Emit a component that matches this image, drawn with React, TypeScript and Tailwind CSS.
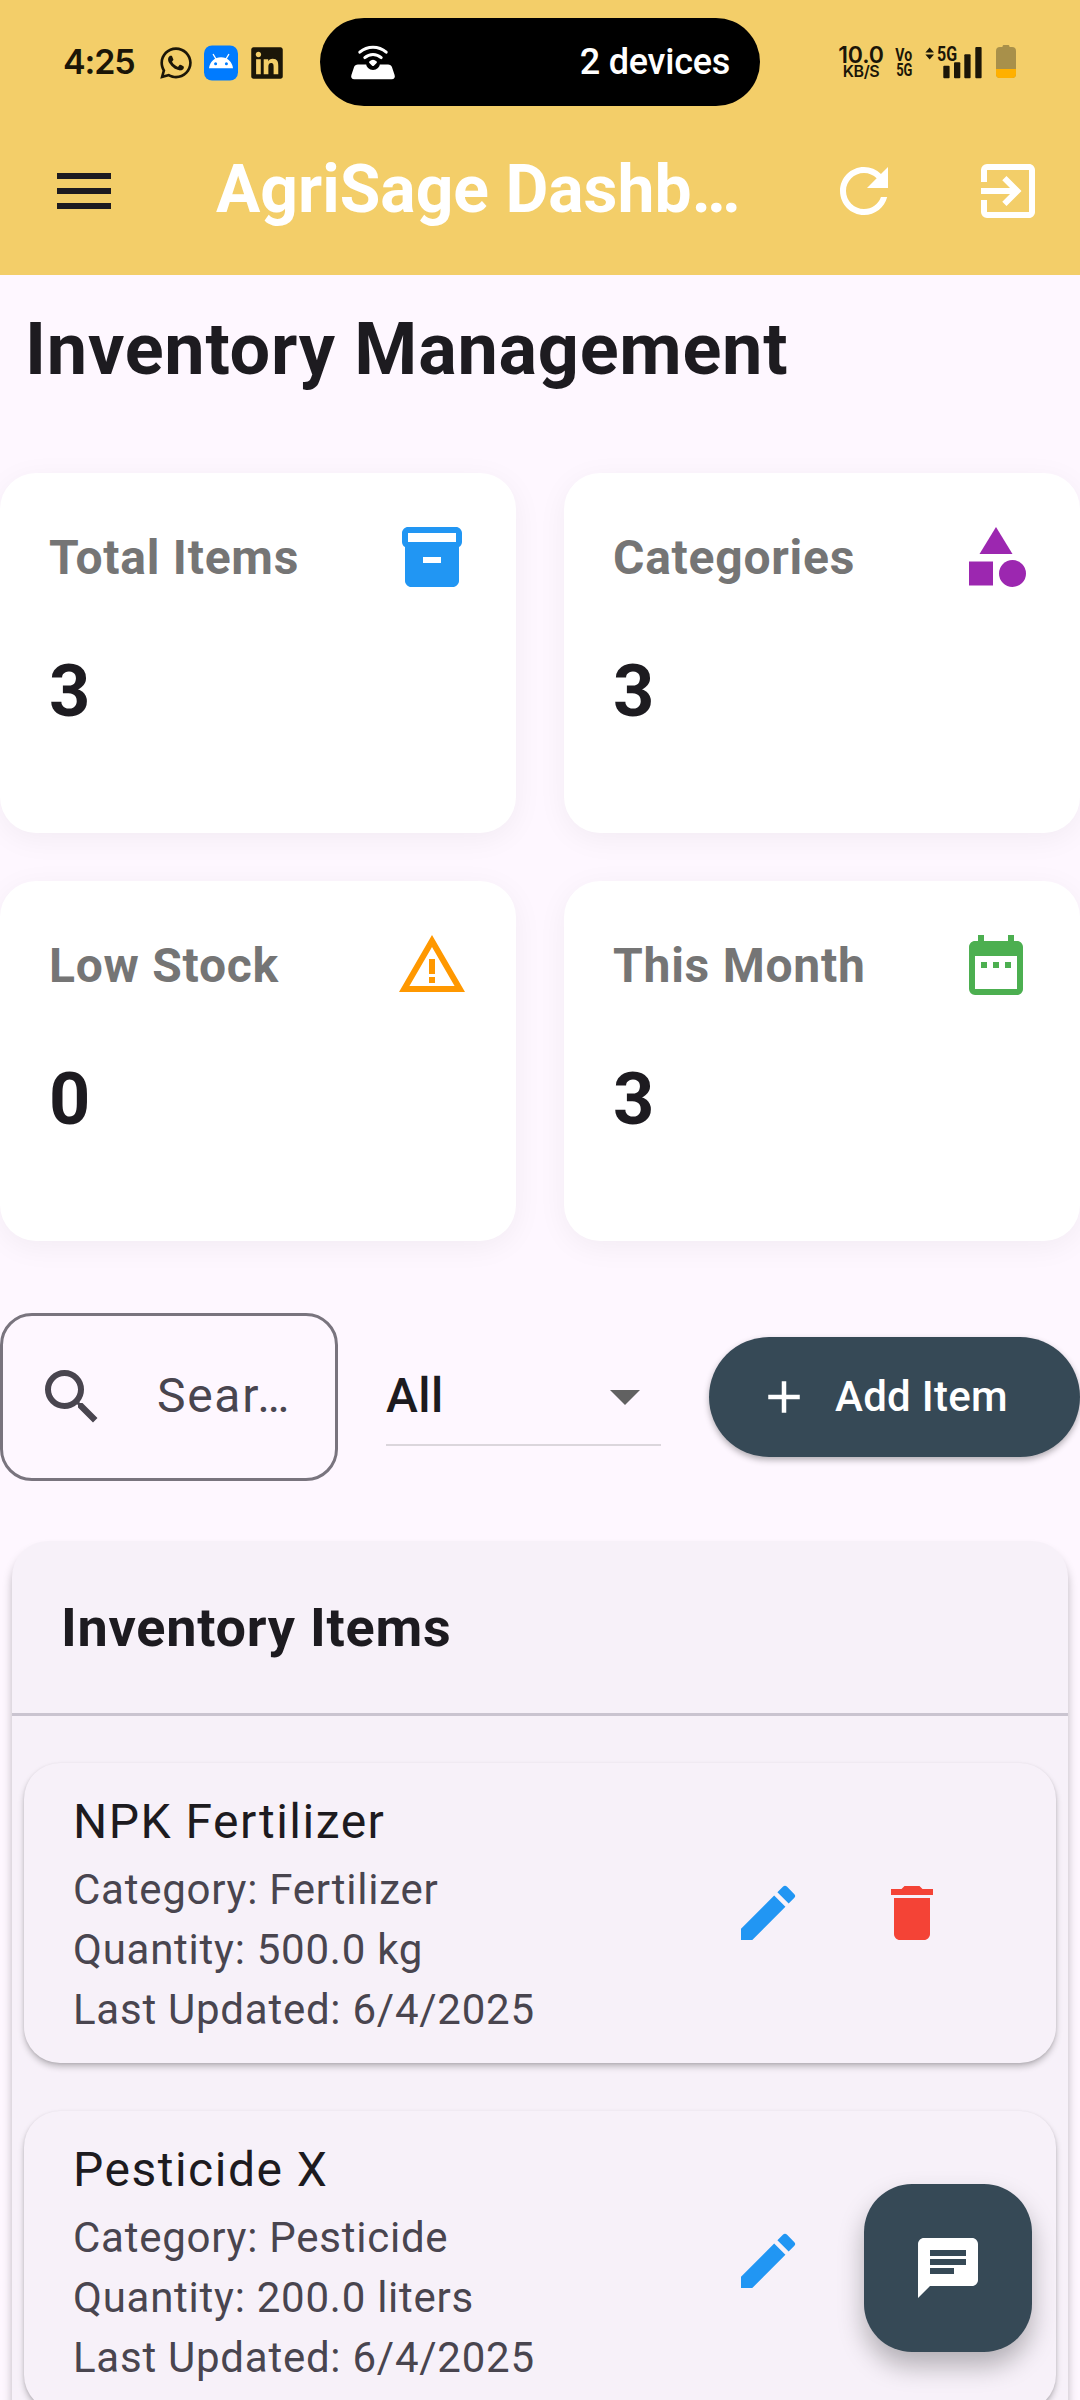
import type { ReactNode } from 'react';
import { FaLinkedin, FaWhatsapp } from 'react-icons/fa';
import {
  MdAdd,
  MdArrowDropDown,
  MdCategory,
  MdChat,
  MdDateRange,
  MdDelete,
  MdEdit,
  MdExitToApp,
  MdInventory2,
  MdMenu,
  MdRefresh,
  MdSearch,
} from 'react-icons/md';

function AndroidBadge() {
  return (
    <svg width="34" height="36" viewBox="0 0 34 36">
      <rect y="0.500" width="34" height="35" rx="8" fill="#007bff" />
      <path d="M5 23.300C5.600 17.200 10.600 12.300 17 12.300s11.400 4.900 12 11z" fill="#fff" />
      <path d="M9.300 9.500l3 5M24.700 9.500l-3 5" stroke="#fff" strokeWidth="1.400" strokeLinecap="round" />
      <circle cx="11.600" cy="18.700" r="1.500" fill="#007bff" />
      <circle cx="22.400" cy="18.700" r="1.500" fill="#007bff" />
    </svg>
  );
}

function HotspotIcon() {
  return (
    <svg width="46" height="36" viewBox="0 0 46 36" fill="none">
      <path
        d="M8 20.500h30c2 0 3.400 1 4 2.800l2.600 7.700c.8 2.500-.4 4.200-3 4.200H4.400c-2.600 0-3.800-1.700-3-4.200L4 23.300c.6-1.800 2-2.800 4-2.800z"
        fill="#fff"
      />
      <circle cx="23" cy="19" r="7" fill="#000" />
      <path d="M19.300 17.500a5.600 5.600 0 0 1 7.400 0c.4.400.3 1-.1 1.400l-2.500 2.500a1.500 1.500 0 0 1-2.200 0l-2.500-2.500c-.4-.4-.5-1-.1-1.400z" fill="#fff" />
      <path d="M14.800 13.600c4.800-4.200 11.600-4.200 16.400 0" stroke="#fff" strokeWidth="3" strokeLinecap="round" />
      <path d="M9.800 8.200c7.700-6.700 18.700-6.700 26.400 0" stroke="#fff" strokeWidth="3" strokeLinecap="round" />
    </svg>
  );
}

function SignalIcon() {
  return (
    <svg width="58" height="32" viewBox="0 0 58 32" fill="#1b1608" className="block">
      <path d="M4.700 0.500L9 5.500H0.400z M4.700 12.500L0.400 7.500H9z" />
      <rect x="18.300" y="18.700" width="6.300" height="12.500" rx="1" />
      <rect x="29" y="15.300" width="6.300" height="15.900" rx="1" />
      <rect x="39.300" y="7.300" width="6.300" height="23.900" rx="1" />
      <rect x="50.300" y="0" width="6.300" height="31.200" rx="1" />
    </svg>
  );
}

function BatteryIcon() {
  return (
    <svg width="20" height="33" viewBox="0 0 20 33">
      <path
        d="M6.500 2V1.500C6.500.6 7.100 0 8 0h4c.9 0 1.500.6 1.500 1.500V2H16a4 4 0 0 1 4 4v23a4 4 0 0 1-4 4H4a4 4 0 0 1-4-4V6a4 4 0 0 1 4-4z"
        fill="#a8904a"
      />
      <path d="M0 24h20v5a4 4 0 0 1-4 4H4a4 4 0 0 1-4-4z" fill="#ffb000" />
    </svg>
  );
}

function WarningIcon() {
  return (
    <svg width="72" height="72" viewBox="0 0 24 24" fill="#ff9800">
      <path d="M12 5.990L19.530 19H4.470L12 5.990M12 2L1 21h22L12 2zm1 14h-2v2h2v-2zm0-6h-2v5h2v-5z" />
    </svg>
  );
}

function StatusBar() {
  return (
    <div className="flex h-[107px] items-start text-[#1b1608]">
      <div className="mt-[41px] ml-[63px] w-[73px] font-['Inter'] text-[34px] leading-[41px] font-semibold tracking-[-1.1px]">
        4:25
      </div>
      <FaWhatsapp size={36} className="mt-[45px] ml-[22px]" />
      <div className="mt-[45px] ml-[10px]">
        <AndroidBadge />
      </div>
      <FaLinkedin size={36} className="mt-[45px] ml-[11px]" />
      <div className="mt-[18px] ml-[35px] flex h-[88px] w-[440px] items-center justify-between rounded-full bg-black pr-[30px] pl-[30px]">
        <HotspotIcon />
        <span className="text-[36px] leading-[42px] font-medium tracking-[-0.25px] text-white">2 devices</span>
      </div>
      <div className="mt-[45px] ml-[77px] flex w-[48px] flex-col items-center font-['Inter']">
        <span className="text-[23px] leading-[21px] font-semibold tracking-[-0.2px]">10.0</span>
        <span className="text-[16px] leading-[11px] font-semibold tracking-[-0.5px]">KB/S</span>
      </div>
      <div className="mt-[47px] ml-[11px] flex w-[16px] flex-col items-center text-[18px] leading-[15px] font-bold">
        <span className="scale-x-[0.78]">Vo</span>
        <span className="scale-x-[0.72]">5G</span>
      </div>
      <div className="relative mt-[47px] ml-[13px]">
        <SignalIcon />
        <span className="absolute top-0 left-[12px] origin-left scale-x-[0.82] text-[19.500px] leading-[15px] font-bold">5G</span>
      </div>
      <div className="mt-[45px] ml-[13px]">
        <BatteryIcon />
      </div>
    </div>
  );
}

function AppBar() {
  return (
    <div className="flex h-[168px] items-center">
      <div className="flex w-[168px] shrink-0 justify-center">
        <MdMenu size={72} color="#1d1b20" />
      </div>
      <h1 className="ml-12 flex-1 pb-[3px] text-[66px] leading-[84px] font-bold whitespace-nowrap text-white">AgriSage Dashb…</h1>
      <div className="flex w-[288px] shrink-0 text-white">
        <div className="flex w-[144px] justify-center">
          <MdRefresh size={72} />
        </div>
        <div className="flex w-[144px] justify-center">
          <MdExitToApp size={72} />
        </div>
      </div>
    </div>
  );
}

function StatCard({ label, value, icon }: { label: string; value: number; icon: ReactNode }) {
  return (
    <div className="h-[360px] rounded-[36px] bg-white p-12 shadow-[0_6px_30px_rgba(0,0,0,0.05)]">
      <div className="flex items-center justify-between">
        <span className="pl-px text-[48px] leading-[69px] font-bold tracking-[0.75px] text-[#757575]">{label}</span>
        {icon}
      </div>
      <div className="mt-[47px] pl-px text-[72px] leading-[103px] font-bold tracking-[0.75px]">{value}</div>
    </div>
  );
}

function ItemCard({ name, category, quantity, updated }: { name: string; category: string; quantity: string; updated: string }) {
  return (
    <div className="flex h-[300px] items-center justify-between rounded-[36px] bg-[#f7f1f9] pr-[72px] pl-[49px] shadow-[0_4px_6px_rgba(0,0,0,0.22),0_1px_3px_rgba(0,0,0,0.1)]">
      <div>
        <div className="text-[48px] leading-[72px] tracking-[1.5px]">{name}</div>
        <div className="mt-[2px] text-[42px] leading-[60px] tracking-[0.75px] text-[#49454f]">
          <div>Category: {category}</div>
          <div>Quantity: {quantity}</div>
          <div>Last Updated: {updated}</div>
        </div>
      </div>
      <div className="flex">
        <div className="flex w-[144px] justify-center">
          <MdEdit size={72} color="#2196f3" />
        </div>
        <div className="flex w-[144px] justify-center">
          <MdDelete size={72} color="#f44336" />
        </div>
      </div>
    </div>
  );
}

export default function App() {
  return (
    <div className="relative h-[2400px] w-[1080px] overflow-hidden bg-[#fef7ff] font-['Roboto',sans-serif] text-[#1d1b20]">
      <header className="bg-[#f3ce69]">
        <StatusBar />
        <AppBar />
      </header>

      <main>
        <h2 className="mt-6 ml-[25px] text-[72px] leading-[102px] font-bold tracking-[0.75px]">Inventory Management</h2>

        <section className="mt-[72px] grid grid-cols-2 gap-12">
          <StatCard label="Total Items" value={3} icon={<MdInventory2 size={72} color="#2196f3" />} />
          <StatCard label="Categories" value={3} icon={<MdCategory size={72} color="#9c27b0" />} />
          <StatCard label="Low Stock" value={0} icon={<WarningIcon />} />
          <StatCard label="This Month" value={3} icon={<MdDateRange size={72} color="#4caf50" />} />
        </section>

        <section className="mt-[72px] flex items-center">
          <div className="flex h-[168px] w-[338px] items-center rounded-[32px] border-[3px] border-[#79747e] pl-[33px] text-[#49454f]">
            <MdSearch size={72} />
            <span className="ml-[49px] pb-[3px] text-[48px] leading-[72px] tracking-[1.7px]">Sear…</span>
          </div>
          <div className="ml-12 flex h-[98px] w-[275px] items-center justify-between border-b-2 border-[#dbd6dc]">
            <span className="text-[48px] leading-[72px] font-medium tracking-[0.45px]">All</span>
            <MdArrowDropDown size={72} color="#616161" />
          </div>
          <button className="ml-12 flex h-[120px] w-[371px] items-center rounded-full bg-[#364956] pl-12 text-white shadow-[0_3px_6px_rgba(0,0,0,0.3)]">
            <MdAdd size={54} />
            <span className="ml-6 text-[42px] leading-[60px] font-medium tracking-[0.3px]">Add Item</span>
          </button>
        </section>

        <section className="mx-3 mt-[60px] h-[1000px] rounded-[36px] bg-[#f7f1f9] shadow-[0_8px_10px_rgba(0,0,0,0.26)]">
          <h3 className="pt-12 pr-12 pb-[47px] pl-[49px] text-[54px] leading-[77px] font-bold tracking-[0.75px]">Inventory Items</h3>
          <div className="h-[3px] bg-[#cac4d0]" />
          <div className="mt-[47px] flex flex-col gap-12 px-3">
            <ItemCard name="NPK Fertilizer" category="Fertilizer" quantity="500.0 kg" updated="6/4/2025" />
            <ItemCard name="Pesticide X" category="Pesticide" quantity="200.0 liters" updated="6/4/2025" />
          </div>
        </section>
      </main>

      <button className="absolute right-12 bottom-12 flex size-[168px] items-center justify-center rounded-[48px] bg-[#364956] text-white shadow-[0_14px_26px_rgba(0,0,0,0.28)]">
        <MdChat size={72} />
      </button>
    </div>
  );
}
